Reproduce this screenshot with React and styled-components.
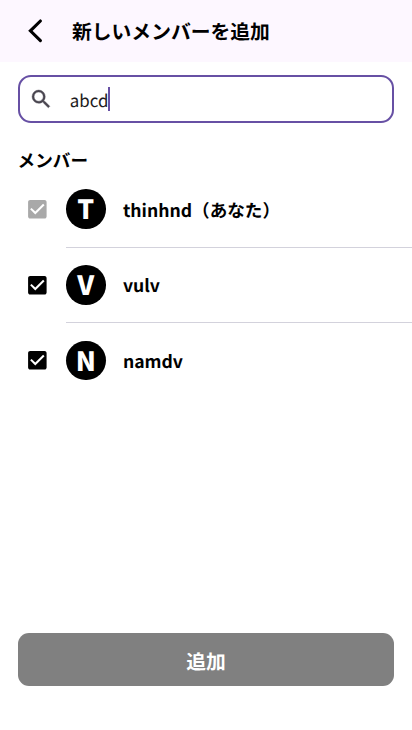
import React from "react";
import styled, { createGlobalStyle } from "styled-components";

const GlobalStyle = createGlobalStyle`
  * { box-sizing: border-box; }
  body {
    margin: 0;
    background: #fff;
    color: #000;
    font-family: "Noto Sans CJK JP", sans-serif;
    text-rendering: geometricPrecision;
  }
`;

const Screen = styled.div`
  display: flex;
  flex-direction: column;
  height: 730px;
  width: 100%;
  overflow: hidden;
`;

const Header = styled.header`
  display: flex;
  align-items: center;
  flex: none;
  height: 61.5px;
  background: #fdf7ff;
`;

const BackButton = styled.button`
  display: flex;
  flex: none;
  width: 72px;
  height: 61px;
  padding: 0;
  border: 0;
  background: none;
`;

const Title = styled.h1`
  margin: 0;
  font-size: 19.8px;
  font-weight: 700;
  line-height: 28px;
`;

const SearchField = styled.div`
  display: flex;
  align-items: center;
  flex: none;
  height: 48px;
  margin: 13.3px 17.6px 0;
  border: 2px solid #6750a4;
  border-radius: 13px;
`;

const SearchIcon = styled.svg`
  flex: none;
  width: 24.4px;
  height: 24.4px;
  margin-left: 9.6px;
  margin-right: 16.2px;
`;

const Query = styled.span`
  font-size: 16.9px;
  line-height: 24px;
  color: #1d1b20;
  padding-top: 3px;
`;

const Caret = styled.span`
  width: 2px;
  height: 24px;
  background: #6750a4;
`;

const SectionTitle = styled.h2`
  flex: none;
  margin: 26px 0 0 17.6px;
  font-size: 17.6px;
  font-weight: 700;
  line-height: 24px;
`;

const MemberList = styled.ul`
  flex: 1;
  margin: -1px 0 0;
  padding: 0;
  list-style: none;
`;

const MemberRow = styled.li`
  display: flex;
  height: 75.8px;
`;

const CheckIcon = styled.svg`
  flex: none;
  width: 24.7px;
  height: 24.7px;
  margin: 25px 16.3px 0 25px;
`;

const MemberBody = styled.div`
  display: flex;
  flex: 1;
  border-bottom: ${(p) => (p.$last ? "0" : "1px solid #d3d2dc")};
`;

const Avatar = styled.div`
  display: flex;
  justify-content: center;
  flex: none;
  width: 39.6px;
  height: 39.6px;
  margin: 17.4px 17.3px 0 0;
  border-radius: 50%;
  background: #000;
  color: #fff;
  font-size: 26.4px;
  font-weight: 900;
  line-height: 38px;
`;

const Name = styled.span`
  margin-top: 25.8px;
  font-size: 17.6px;
  font-weight: 700;
  line-height: 26px;
  white-space: nowrap;
`;

const AddButton = styled.button`
  flex: none;
  height: 52.7px;
  margin: 0 17.6px 44.2px;
  padding: 3px 0 0;
  border: 0;
  border-radius: 11px;
  background: #808080;
  color: #fff;
  font-family: inherit;
  text-rendering: inherit;
  font-size: 19.8px;
  font-weight: 700;
  line-height: 28px;
`;

const members = [
  { name: "thinhnd（あなた）", initial: "T", color: "#a9a9a9" },
  { name: "vulv", initial: "V", color: "#000" },
  { name: "namdv", initial: "N", color: "#000" },
];

function Check({ color }) {
  return (
    <CheckIcon viewBox="0 0 24 24">
      <path
        fill={color}
        d="M19 3H5c-1.11 0-2 .9-2 2v14c0 1.1.89 2 2 2h14c1.11 0 2-.9 2-2V5c0-1.1-.89-2-2-2zm-9 14l-5-5 1.41-1.41L10 14.17l7.59-7.59L19 8l-9 9z"
      />
    </CheckIcon>
  );
}

export default function App() {
  return (
    <>
      <GlobalStyle />
      <Screen>
        <Header>
          <BackButton aria-label="戻る">
            <svg width="72" height="61" viewBox="0 0 72 61" fill="none">
              <path
                d="M40.4 21 30.4 30.8 40.4 40.6"
                stroke="#000"
                strokeWidth="3.1"
                strokeLinecap="round"
              />
            </svg>
          </BackButton>
          <Title>新しいメンバーを追加</Title>
        </Header>
        <SearchField>
          <SearchIcon viewBox="0 0 24 24">
            <path
              fill="#49454f"
              stroke="#49454f"
              strokeWidth="0.4"
              d="M15.5 14h-.79l-.28-.27A6.471 6.471 0 0 0 16 9.5 6.5 6.5 0 1 0 9.5 16c1.61 0 3.09-.59 4.23-1.57l.27.28v.79l5 4.99L20.49 19l-4.99-5zm-6 0C7.01 14 5 11.99 5 9.5S7.01 5 9.5 5 14 7.01 14 9.5 11.99 14 9.5 14z"
            />
          </SearchIcon>
          <Query>abcd</Query>
          <Caret />
        </SearchField>
        <SectionTitle>メンバー</SectionTitle>
        <MemberList>
          {members.map((m, i) => (
            <MemberRow key={m.name}>
              <Check color={m.color} />
              <MemberBody $last={i === members.length - 1}>
                <Avatar>{m.initial}</Avatar>
                <Name>{m.name}</Name>
              </MemberBody>
            </MemberRow>
          ))}
        </MemberList>
        <AddButton>追加</AddButton>
      </Screen>
    </>
  );
}
